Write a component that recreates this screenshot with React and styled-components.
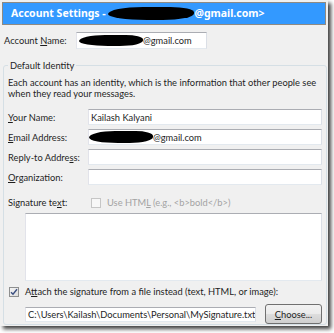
import React from "react";
import styled, { createGlobalStyle } from "styled-components";

const GlobalStyle = createGlobalStyle`
  html, body { margin: 0; padding: 0; background: #ffffff; }
  body { font-family: Lato, "Noto Sans", sans-serif; }
  #root { width: 334px; height: 333px; }
`;

const Window = styled.div`
  width: 328px;
  height: 326px;
  box-sizing: border-box;
  background: #f0f0f0;
  box-shadow: 3px 3px 4px rgba(0, 0, 0, 0.75);
  display: flex;
  flex-direction: column;
  font-size: 9.3px;
  line-height: 11px;
  color: #1e1e1e;
`;

const TitleBar = styled.div`
  margin: 2px 2px 0 2px;
  height: 23px;
  box-sizing: border-box;
  background: #3399ff;
  border: 1px solid #8f8a82;
  display: flex;
  align-items: center;
  padding-left: 8px;
  color: #ffffff;
  font-family: "Noto Sans", sans-serif;
  font-weight: 700;
  font-size: 10.5px;
  white-space: nowrap;
`;

const Blob = styled.span`
  display: inline-block;
  flex: none;
  width: ${(p) => p.$w}px;
  height: ${(p) => p.$h}px;
  background: #000;
  border-radius: 45% 30% 40% 50% / 60% 45% 55% 50%;
`;

const AccountRow = styled.div`
  margin-top: 7px;
  padding-left: 4px;
  display: flex;
  align-items: center;
`;

const AccountLabel = styled.label`
  width: 72px;
`;

const TextBox = styled.div`
  box-sizing: border-box;
  width: ${(p) => (p.$w ? `${p.$w}px` : "auto")};
  height: ${(p) => p.$h || 16}px;
  background: #ffffff;
  border: 1px solid;
  border-color: #abadb3 #dbdfe6 #e3e9ef #e2e3ea;
  display: flex;
  align-items: center;
  padding-left: ${(p) => (p.$pl != null ? p.$pl : 2)}px;
  white-space: nowrap;
  overflow: hidden;
  color: #1e1e1e;
`;

const Group = styled.fieldset`
  margin: 11px 1px 1px 3px;
  padding: 0 4px 0 4px;
  border: 1px solid #d5dfe5;
  border-radius: 3px;
  flex: 1;
  display: flex;
  flex-direction: column;
  min-width: 0;
`;

const Legend = styled.legend`
  padding: 0 2px;
  line-height: 11px;
`;

const Description = styled.p`
  margin: 6px 0 0 0;
  white-space: nowrap;
`;

const Form = styled.div`
  margin-top: 10px;
  display: grid;
  grid-template-columns: 80px 1fr;
  row-gap: 4px;
  align-items: center;
`;

const SigRow = styled.div`
  margin-top: 12px;
  display: grid;
  grid-template-columns: 80px 1fr;
  align-items: center;
  height: 11px;
`;

const CheckLine = styled.label`
  display: flex;
  align-items: center;
  gap: ${(p) => p.$gap || 6}px;
  color: ${(p) => (p.$disabled ? "#a3a3a3" : "#1e1e1e")};
  margin-left: ${(p) => p.$ml || 0}px;
  white-space: nowrap;
`;

const Box = styled.span`
  box-sizing: border-box;
  flex: none;
  width: 10px;
  height: 10px;
  border: 1px solid ${(p) => (p.$disabled ? "#c6c6c6" : "#8e8f8f")};
  background: ${(p) =>
    p.$disabled ? "#f7f7f7" : "linear-gradient(135deg, #f4f4f4, #dedede)"};
  display: flex;
  align-items: center;
  justify-content: center;
`;

const SigArea = styled.div`
  margin: 5px 0 0 17px;
  height: 68px;
  box-sizing: border-box;
  background: #ffffff;
  border: 1px solid;
  border-color: #abadb3 #dbdfe6 #e3e9ef #e2e3ea;
`;

const AttachRow = styled.div`
  margin-top: 5px;
  height: 11px;
  display: flex;
  align-items: center;
`;

const PathRow = styled.div`
  margin: 7px 0 0 17px;
  display: flex;
  align-items: center;
  gap: 9px;
`;

const Button = styled.button`
  box-sizing: border-box;
  width: 57px;
  height: 20px;
  border: 1px solid #707070;
  border-radius: 3px;
  background: linear-gradient(#f2f2f2 0%, #ebebeb 49%, #dddddd 50%, #cfcfcf 100%);
  font-family: inherit;
  font-size: 9.3px;
  color: #1e1e1e;
  padding: 0;
`;

const Check = () => (
  <svg width="8" height="8" viewBox="0 0 8 8">
    <path d="M1 4.2 L3 6.3 L7 1.2" fill="none" stroke="#3b4f80" strokeWidth="1.4" />
  </svg>
);

export default function App() {
  return (
    <>
      <GlobalStyle />
      <Window>
        <TitleBar>
          Account Settings -&nbsp;<Blob $w={86} $h={13} />@gmail.com&gt;
        </TitleBar>
        <AccountRow>
          <AccountLabel>
            Account <u>N</u>ame:
          </AccountLabel>
          <TextBox $w={131} $h={17}>
            <Blob $w={64} $h={11} />
            <span>@gmail.com</span>
          </TextBox>
        </AccountRow>
        <Group>
          <Legend>Default Identity</Legend>
          <Description>
            Each account has an identity, which is the information that other people see
            <br />
            when they read your messages.
          </Description>
          <Form>
            <label>
              <u>Y</u>our Name:
            </label>
            <TextBox>Kailash Kalyani</TextBox>
            <label>
              <u>E</u>mail Address:
            </label>
            <TextBox $pl={0}>
              <Blob $w={64} $h={12} />
              <span>@gmail.com</span>
            </TextBox>
            <label>
              Reply-to Addre<u>s</u>s:
            </label>
            <TextBox />
            <label>
              <u>O</u>rganization:
            </label>
            <TextBox />
          </Form>
          <SigRow>
            <label>
              Signature te<u>x</u>t:
            </label>
            <CheckLine $disabled $ml={3}>
              <Box $disabled />
              <span>
                Use HTM<u>L</u> (e.g., &lt;b&gt;bold&lt;/b&gt;)
              </span>
            </CheckLine>
          </SigRow>
          <SigArea />
          <AttachRow>
            <CheckLine $ml={1} $gap={6}>
              <Box>
                <Check />
              </Box>
              <span>
                A<u>t</u>tach the signature from a file instead (text, HTML, or image):
              </span>
            </CheckLine>
          </AttachRow>
          <PathRow>
            <TextBox $w={231} $h={15}>
              C:\Users\Kailash\Documents\Personal\MySignature.txt
            </TextBox>
            <Button>
              <u>C</u>hoose...
            </Button>
          </PathRow>
        </Group>
      </Window>
    </>
  );
}
